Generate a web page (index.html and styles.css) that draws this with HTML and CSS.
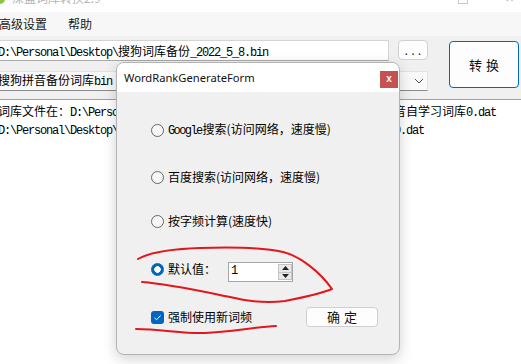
FILE: index.html
```html
<!DOCTYPE html>
<html lang="zh-CN">
<head>
    <meta charset="UTF-8">
    <meta name="viewport" content="width=device-width, initial-scale=1.0">
    <title>深蓝词库转换</title>
    <link rel="stylesheet" href="styles.css">
</head>
<body>
    <div class="app">
        <div class="titlebar">
            <span class="app-icon"></span>
            <span class="app-title">深蓝词库转换2.9</span>
            <span class="win-max"></span>
            <span class="win-close">✕</span>
        </div>

        <div class="menubar">
            <span class="menu-item">高级设置</span>
            <span class="menu-item">帮助</span>
        </div>

        <div class="toolbar">
            <div class="textbox mono"><span class="en">D:\Personal\Desktop\</span>搜狗词库备份<span class="en">_2022_5_8.bin</span></div>
            <button class="btn-browse">...</button>
            <button class="btn-convert"><span>转</span><span>换</span></button>
            <div class="combo mono">
                <span>搜狗拼音备份词库<span class="en">bin</span></span>
                <svg class="chevron" width="10" height="6" viewBox="0 0 10 6"><path d="M1 1 L5 5 L9 1" fill="none" stroke="#555" stroke-width="1"/></svg>
            </div>
        </div>

        <div class="output mono">
            <div>词库文件在：<span class="en">D:\Personal\Desktop\</span>搜狗词库备份<span class="en">_2022_5_8_texts\</span>搜狗拼音自学习词库<span class="en">0.dat</span></div>
            <div><span class="en">D:\Personal\Desktop\</span>搜狗词库备份<span class="en">_2022_5_8_texts\</span>搜狗拼音自学习词库<span class="en">0.dat</span></div>
        </div>
    </div>

    <!-- modal dialog on top of the main window -->
    <div class="dialog">
        <div class="dlg-title">
            <span class="dlg-caption">WordRankGenerateForm</span>
            <span class="dlg-close">x</span>
        </div>
        <div class="dlg-body">
            <div class="opt row-google">
                <span class="radio"></span>
                <span class="label"><span class="en en-tight">Google</span>搜索(访问网络，速度慢)</span>
            </div>
            <div class="opt row-baidu">
                <span class="radio"></span>
                <span class="label">百度搜索(访问网络，速度慢)</span>
            </div>
            <div class="opt row-freq">
                <span class="radio"></span>
                <span class="label">按字频计算(速度快)</span>
            </div>
            <div class="opt row-default">
                <span class="radio checked"></span>
                <span class="label label-default">默认值：</span>
                <div class="numeric">
                    <span class="num-value">1</span>
                    <div class="spinner">
                        <span class="spin-btn"><svg width="7" height="4" viewBox="0 0 7 4"><path d="M0 4 L3.5 0 L7 4 Z" fill="#222"/></svg></span>
                        <span class="spin-btn"><svg width="7" height="4" viewBox="0 0 7 4"><path d="M0 0 L3.5 4 L7 0 Z" fill="#222"/></svg></span>
                    </div>
                </div>
            </div>
            <div class="opt row-force">
                <span class="checkbox"><svg width="13" height="13" viewBox="0 0 13 13"><path d="M3.5 6.8 L5.6 8.8 L9.6 4.4" fill="none" stroke="#fff" stroke-width="1"/></svg></span>
                <span class="label">强制使用新词频</span>
                <button class="btn-ok"><span>确</span><span>定</span></button>
            </div>
        </div>
    </div>

    <!-- red pen marks drawn over the screenshot -->
    <svg class="ink" width="521" height="364" viewBox="0 0 521 364">
        <path d="M138 259 C150 252 170 249 200 248 C230 247 262 247 283 252 C300 256 320 272 332 289 C325 292 305 297 285 301 C270 303 250 302 230 297 C205 292 170 284 142 282" />
        <path d="M136 329 C160 329 185 334 205 333 C230 332 255 327 276 326" />
    </svg>
</body>
</html>
```

FILE: styles.css
```css
body {
    margin: 0;
    width: 521px;
    height: 364px;
    overflow: hidden;
    position: relative;
    background-color: #f0f0f0;
    font-family: "Noto Sans CJK SC", sans-serif;
    font-size: 12px;
    color: #000;
}

.app {
    height: 364px;
    display: flex;
    flex-direction: column;
}

/* main window chrome */
.titlebar {
    height: 12px;
    background: #fff;
    position: relative;
    overflow: hidden;
}

.app-icon {
    position: absolute;
    left: -5px;
    top: -6px;
    width: 10px;
    height: 10px;
    border-radius: 50%;
    background: #8cc63f;
}

.app-title {
    position: absolute;
    left: 12px;
    top: -10px;
    font-size: 12px;
    line-height: 16px;
    color: #b4b4b4;
}

.win-max {
    position: absolute;
    left: 458px;
    top: -6px;
    width: 8px;
    height: 8px;
    border: 1px solid #c8c8c8;
}

.win-close {
    position: absolute;
    left: 505px;
    top: -10px;
    font-size: 11px;
    line-height: 14px;
    color: #b0b0b0;
}

.menubar {
    height: 24px;
    background: #f7f7f7;
    display: flex;
    align-items: center;
}

.menu-item {
    line-height: 16px;
    color: #1a1a1a;
    margin-left: -1px;
    margin-right: 22px;
}

.mono {
    font-family: "Noto Sans CJK SC", sans-serif;
    font-size: 12px;
    line-height: 16px;
}

.en {
    font-family: "Liberation Mono", monospace;
    letter-spacing: -1.2px;
}

.toolbar {
    display: grid;
    grid-template-columns: 395px 9px 30px 21px 70px;
    grid-template-rows: 21px 20px;
    row-gap: 10px;
    margin-left: -6px;
    padding-top: 4px;
}

.textbox {
    grid-column: 1;
    grid-row: 1;
    box-sizing: border-box;
    background: #fff;
    border: 1px solid #d4d4d4;
    border-bottom-color: #a8a8a8;
    padding-left: 3px;
    line-height: 19px;
    white-space: nowrap;
    overflow: hidden;
}

.btn-browse {
    grid-column: 3;
    grid-row: 1;
    height: 20px;
    padding: 0;
    background: #fdfdfd;
    border: 1px solid #d0d0d0;
    border-radius: 4px;
    font-family: "Liberation Mono", monospace;
    font-size: 11px;
    line-height: 22px;
    color: #222;
}

.btn-convert {
    grid-column: 5;
    grid-row: 1 / 3;
    align-self: start;
    margin-top: 1px;
    height: 47px;
    padding: 0;
    background: #fdfdfd;
    border: 1px solid #0067c0;
    border-radius: 4px;
    font-family: "Noto Sans CJK SC", sans-serif;
    font-size: 13px;
    color: #111;
    display: flex;
    align-items: center;
    justify-content: center;
    gap: 4px;
}

.combo {
    grid-column: 1 / 4;
    grid-row: 2;
    box-sizing: border-box;
    display: flex;
    align-items: center;
    justify-content: space-between;
    background: #f9f9f9;
    border: 1px solid #e2e2e2;
    border-bottom-color: #8a8a8a;
    padding-left: 3px;
    padding-right: 3px;
    white-space: nowrap;
}

.chevron {
    display: block;
}

.output {
    flex: 1;
    margin-top: 8px;
    background: #fff;
    border-top: 1px solid #a0a0a0;
    padding-top: 3px;
    margin-left: -2px;
    white-space: nowrap;
    overflow: hidden;
}

/* dialog window */
.dialog {
    position: absolute;
    left: 116px;
    top: 62px;
    width: 284px;
    height: 293px;
    box-sizing: border-box;
    border: 1px solid #b4b4b4;
    border-radius: 8px;
    background: #f0f0f0;
    overflow: hidden;
    box-shadow: 0 4px 14px rgba(0, 0, 0, 0.18);
}

.dlg-title {
    height: 29px;
    background: #fff;
    display: flex;
    align-items: flex-start;
    justify-content: space-between;
    padding-left: 7px;
    padding-right: 1px;
}

.dlg-caption {
    font-family: "Noto Sans", sans-serif;
    font-size: 11.2px;
    line-height: 16px;
    margin-top: 7px;
    color: #111;
}

.dlg-close {
    margin-top: 8px;
    width: 18px;
    height: 17px;
    background: #c75050;
    color: #fff;
    font-family: "Liberation Sans", sans-serif;
    font-weight: bold;
    font-size: 10px;
    line-height: 16px;
    text-align: center;
}

.dlg-body {
    padding: 30px 0 0 34px;
    display: flex;
    flex-direction: column;
}

.opt {
    display: flex;
    align-items: center;
    height: 16px;
}

.row-baidu { margin-top: 31px; }
.row-freq { margin-top: 28px; }

.row-default {
    margin-top: 32px;
    height: 21px;
    align-items: flex-start;
}

.row-force {
    margin-top: 25px;
    height: 20px;
}

.radio {
    width: 13px;
    height: 13px;
    box-sizing: border-box;
    border: 1px solid #666;
    border-radius: 50%;
    background: #f6f6f6;
    flex-shrink: 0;
}

.radio.checked {
    border-color: #0067c0;
    background: radial-gradient(circle, #fff 0, #fff 3px, #0067c0 3.6px);
    margin-top: 2px;
}

.label {
    margin-left: 4px;
    line-height: 16px;
    white-space: nowrap;
}

.en-tight {
    letter-spacing: -1.6px;
    margin-right: 1px;
}

.label-default {
    width: 48px;
    margin-right: 12px;
}

.numeric {
    margin-top: 1px;
    width: 65px;
    height: 20px;
    box-sizing: border-box;
    border: 1px solid #a6a6a6;
    background: #fff;
    display: flex;
    justify-content: space-between;
}

.num-value {
    font-family: "Liberation Mono", monospace;
    font-size: 12px;
    line-height: 17px;
    padding-left: 2px;
}

.spinner {
    width: 14px;
    margin: 1px 0;
    display: flex;
    flex-direction: column;
}

.spin-btn {
    flex: 1;
    display: flex;
    align-items: center;
    justify-content: center;
    background: #e9e9e9;
    border: 1px solid #c4c4c4;
}

.spin-btn + .spin-btn {
    border-top: none;
}

.checkbox {
    width: 13px;
    height: 13px;
    border-radius: 3px;
    background: #0067c0;
    flex-shrink: 0;
}

.checkbox svg {
    display: block;
}

.btn-ok {
    margin-left: 54px;
    width: 72px;
    height: 20px;
    padding: 0;
    background: #fdfdfd;
    border: 1px solid #cfcfcf;
    border-radius: 4px;
    font-family: "Noto Sans CJK SC", sans-serif;
    font-size: 13px;
    line-height: 18px;
    color: #111;
    display: flex;
    align-items: center;
    justify-content: center;
    gap: 4px;
}

.ink {
    position: absolute;
    left: 0;
    top: 0;
    pointer-events: none;
}

.ink path {
    fill: none;
    stroke: #e3161c;
    stroke-width: 2;
    stroke-linecap: round;
    stroke-linejoin: round;
}
```
